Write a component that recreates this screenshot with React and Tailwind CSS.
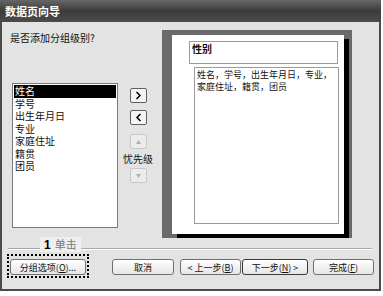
import React from 'react';

const font = { fontFamily: '"Noto Sans CJK SC", "Noto Sans", sans-serif' };

const fields = ['姓名', '学号', '出生年月日', '专业', '家庭住址', '籍贯', '团员'];

const Btn = ({ className = '', children }) => (
  <div
    className={`h-[16px] flex items-center justify-center rounded-[3px] border bg-gradient-to-b from-white to-[#e6e6e6] text-[9px] leading-none text-[#111] ${className}`}
  >
    {children}
  </div>
);

const SmallBtn = ({ disabled, children }) => (
  <div
    className={`w-[17px] h-[15px] flex items-center justify-center rounded-[2px] border ${
      disabled ? 'border-[#c8c8c8] bg-[#ececec] text-[#b0b0b0]' : 'border-[#606060] bg-[#f4f4f4] text-black'
    }`}
  >
    {children}
  </div>
);

export default function App() {
  return (
    <div className="w-[383px] h-[296px] bg-white relative" style={font}>
      <div className="w-[381px] h-[291px] flex flex-col border-x-2 border-b-2 border-[#4a4a4a]">
        {/* title bar */}
        <div className="h-[22px] -mx-[2px] flex items-center px-[5px] bg-gradient-to-b from-[#676767] via-[#3c3c3c] to-[#4b4b4b]">
          <span className="text-white font-bold text-[11px]">数据页向导</span>
        </div>

        <div className="flex-1 bg-[#e3e3e3] flex flex-col relative">
          <div className="flex pt-[8px]">
            {/* left column */}
            <div className="w-[160px] flex flex-col">
              <div className="pl-[8px] mt-[1px] text-[10px] leading-[13px] text-[#111]">是否添加分组级别?</div>
              <div className="flex mt-[39px]">
                <div className="ml-[10px] w-[106px] h-[145px] bg-white border border-[#7a7a7a] p-px">
                  {fields.map((f, i) => (
                    <div
                      key={f}
                      className={`h-[12.5px] leading-[12.5px] text-[10px] pl-[1px] ${
                        i === 0 ? 'bg-black text-white' : 'text-[#111]'
                      }`}
                    >
                      {f}
                    </div>
                  ))}
                </div>
                <div className="w-[36px] ml-[2px] flex flex-col items-center">
                  <div className="mt-[5px]">
                    <SmallBtn>
                      <svg width="7" height="9" viewBox="0 0 7 9">
                        <path d="M1.5 1 L5 4.5 L1.5 8" fill="none" stroke="#000" strokeWidth="1.5" />
                      </svg>
                    </SmallBtn>
                  </div>
                  <div className="mt-[7px]">
                    <SmallBtn>
                      <svg width="7" height="9" viewBox="0 0 7 9">
                        <path d="M5.5 1 L2 4.5 L5.5 8" fill="none" stroke="#000" strokeWidth="1.5" />
                      </svg>
                    </SmallBtn>
                  </div>
                  <div className="mt-[9px]">
                    <SmallBtn disabled>
                      <svg width="7" height="6" viewBox="0 0 7 6">
                        <path d="M3.5 1 L6 5 L1 5 Z" fill="#b0b0b0" />
                      </svg>
                    </SmallBtn>
                  </div>
                  <div className="mt-[3px] text-[10px] leading-[13px] text-[#111] whitespace-nowrap">忧先级</div>
                  <div className="mt-[3px]">
                    <SmallBtn disabled>
                      <svg width="7" height="6" viewBox="0 0 7 6">
                        <path d="M1 1 L6 1 L3.5 5 Z" fill="#b0b0b0" />
                      </svg>
                    </SmallBtn>
                  </div>
                </div>
              </div>
            </div>

            {/* preview */}
            <div className="w-[190px] h-[208px] bg-[#6a6a6a] pt-[5px] pl-[10px]">
              <div className="w-[172px] h-[199px] bg-white shadow-[5px_4px_0_#000] relative">
                <div className="absolute left-[17px] top-[6px] w-[149px] h-[23px] border border-[#9a9a9a] px-[2px] text-[10px] leading-[13px] font-bold text-[#111]">
                  性别
                </div>
                <div className="absolute left-[22px] top-[32px] w-[145px] h-[157px] border border-[#9a9a9a] px-[2px] pt-[1px] text-[9px] leading-[12px] text-[#111]">
                  姓名，学号，出生年月日，专业，
                  <br />
                  家庭住址，籍贯，团员
                </div>
              </div>
            </div>
          </div>

          {/* separator */}
          <div className="mt-[10px] mx-[6px] w-[364px] h-[2px] border-t border-[#a9a9a9] border-b border-b-white" />

          {/* button row */}
          <div className="flex mt-[9px] pl-[8px]">
            <Btn className="w-[76px] border-[#707070]">
              分组选项(<u>O</u>)...
            </Btn>
            <Btn className="w-[62px] ml-[26px] border-[#707070]">取消</Btn>
            <Btn className="w-[61px] ml-[6px] border-[#707070]">
              &lt; 上一步(<u>B</u>)
            </Btn>
            <Btn className="w-[66px] ml-[1px] border-[#3a3a3a]">
              下一步(<u>N</u>) &gt;
            </Btn>
            <Btn className="w-[61px] ml-[5px] border-[#707070]">
              完成(<u>F</u>)
            </Btn>
          </div>

          {/* annotation */}
          <div className="absolute left-[38px] top-[215px] h-[15px] px-[4px] flex items-center gap-[4px] bg-[#efefef]">
            <span className="text-[12px] font-bold text-black leading-none" style={{ fontFamily: '"Liberation Sans", sans-serif' }}>1</span>
            <span className="text-[11px] text-[#777] leading-none">单击</span>
          </div>
          <div className="absolute left-[5px] top-[232px] w-[82px] h-[24px] border-2 border-dotted border-black" />
        </div>
      </div>
    </div>
  );
}
